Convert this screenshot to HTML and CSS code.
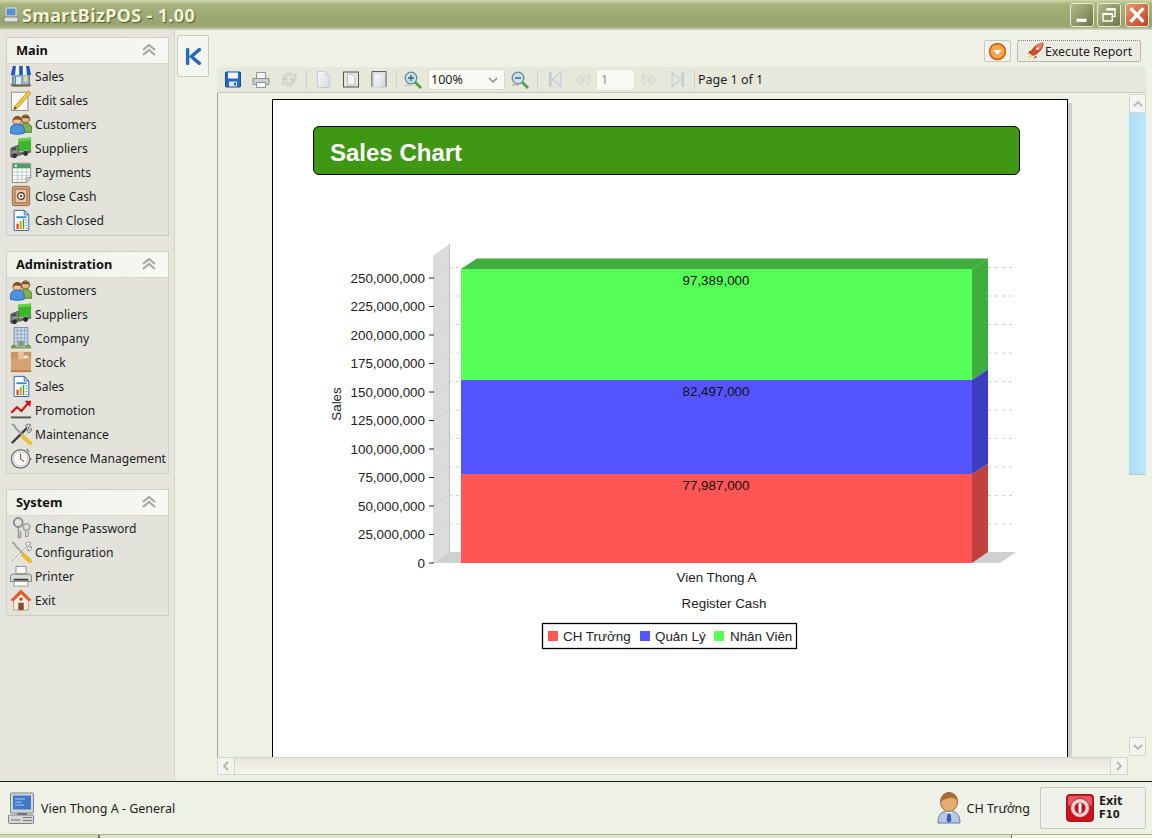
FILE: index.html
```html
<!DOCTYPE html>
<html lang="en">
<head>
<meta charset="utf-8">
<title>SmartBizPOS - 1.00</title>
<link rel="stylesheet" href="styles.css">
</head>
<body>
<svg class="sprites" width="0" height="0" aria-hidden="true">
  <symbol id="i-shop" viewBox="0 0 24 24">
    <rect x="3" y="9" width="18" height="14" fill="#8fb7d8" stroke="#6b5a44"/>
    <rect x="6" y="12" width="7" height="11" fill="#d7ecf7" stroke="#5c7fa3"/>
    <rect x="15" y="12" width="4" height="6" fill="#e6d98a"/>
    <path d="M3 1h18l2 10H1z" fill="#fff"/>
    <path d="M3 1h3.500l-1 10H1zM10 1h4v10h-4zM17.500 1H21l2 10h-4.500z" fill="#1d57c4"/>
    <rect x="1" y="21" width="22" height="2" fill="#7d6a4c"/>
  </symbol>
  <symbol id="i-edit" viewBox="0 0 24 24">
    <rect x="1.500" y="3.500" width="18" height="20" fill="#f7f7f3" stroke="#8b8b86"/>
    <path d="M5 19 20 2l3 2.500L8 21l-4 1.500z" fill="#f2c63b" stroke="#b9871c" stroke-width=".8"/>
    <path d="M4 22.500 5 19l3 2z" fill="#5a4526"/>
  </symbol>
  <symbol id="i-people" viewBox="0 0 24 24">
    <circle cx="17" cy="6.500" r="4.500" fill="#e3b98a" stroke="#6d4a24"/>
    <path d="M12.500 6c.5-4 8-5 9 0-3 0-6-1-9 0z" fill="#7a4d1f"/>
    <path d="M10 20c0-5 3-9 7-9s7 3 7 7v3H10z" fill="#7fb04a" stroke="#4d7a25"/>
    <circle cx="8" cy="8.500" r="4.800" fill="#eec29a" stroke="#7a4d1f"/>
    <path d="M3 8c.5-5 9.500-6 10 0-3-.5-7-2-10 0z" fill="#8a4c18"/>
    <path d="M.5 22v-4c0-4 3.500-6 7.500-6s7.500 2 7.500 6v4c-4 1.500-11 1.500-15 0z" fill="#4d92de" stroke="#2a60aa"/>
  </symbol>
  <symbol id="i-truck" viewBox="0 0 24 24">
    <path d="M9 2l14-1.500V14L9 16z" fill="#3eb52c"/>
    <path d="M9 2l14-1.500v3L9 5z" fill="#62d44e"/>
    <path d="M1 12l8-3v10l-8 2z" fill="#8c8f8c" stroke="#555"/>
    <path d="M2 12.500 7 11v3l-5 1z" fill="#3d4850"/>
    <path d="M0 19l23-5v3L1 23z" fill="#666b68"/>
    <circle cx="5" cy="20.500" r="2.600" fill="#2d2d2d"/>
    <circle cx="17" cy="18" r="2.600" fill="#2d2d2d"/>
  </symbol>
  <symbol id="i-cal" viewBox="0 0 24 24">
    <path d="M2.500 2.500h20V18l-5 5.500h-15z" fill="#fafaf5" stroke="#86867e"/>
    <rect x="3" y="3" width="19" height="5" fill="#4f9e63"/>
    <rect x="5" y="4" width="2.500" height="2.500" fill="#d5efd8"/>
    <path d="M3 12h19M3 16h19M3 20h15M8 9v14M13 9v14M18 9v9" stroke="#b9c2c9" fill="none" stroke-width=".9"/>
    <path d="M17.500 23.500V18h5z" fill="#d8d8cf" stroke="#86867e" stroke-width=".7"/>
  </symbol>
  <symbol id="i-safe" viewBox="0 0 24 24">
    <rect x="2.500" y="1.500" width="19" height="21" rx="2" fill="#d6a37c" stroke="#8a6144"/>
    <rect x="5.500" y="4.500" width="13" height="15" fill="#e8c6a6" stroke="#8d6549"/>
    <circle cx="12" cy="12" r="3.600" fill="#f5eadf" stroke="#4b3325" stroke-width="1.300"/>
    <circle cx="12" cy="12" r="1.200" fill="#352217"/>
  </symbol>
  <symbol id="i-report" viewBox="0 0 24 24">
    <path d="M4.500 1.500h11l5 5v17h-16z" fill="#fbfcff" stroke="#2b5c94"/>
    <path d="M15.500 1.500v5h5z" fill="#b8d3ef" stroke="#2b5c94" stroke-width=".8"/>
    <rect x="7" y="8" width="11" height="2" fill="#2f86d6"/>
    <rect x="7" y="16" width="2.500" height="6" fill="#e0482f"/>
    <rect x="10.500" y="13" width="2.500" height="9" fill="#e8a020"/>
    <rect x="14" y="11" width="1.500" height="11" fill="#33a333"/>
    <path d="M17 12h2M17 15h2M17 18h2M17 21h2" stroke="#2f86d6"/>
  </symbol>
  <symbol id="i-company" viewBox="0 0 24 24">
    <rect x="4.500" y=".5" width="15" height="20" fill="#cfdcea" stroke="#6f8ba8"/>
    <path d="M8 1v19M12 1v19M16 1v19M5 4h14M5 8h14M5 12h14M5 16h14" stroke="#7d9bbb" stroke-width=".8"/>
    <rect x="9" y="15" width="6" height="6" fill="#8f8f84"/>
    <path d="M1 23c0-3 1.500-4 3-4s3 1 3 4zM17 23c0-3 1.500-4 3-4s3 1 3 4z" fill="#6da143"/>
    <rect x="1" y="21.500" width="22" height="2" fill="#7ca253"/>
  </symbol>
  <symbol id="i-box" viewBox="0 0 24 24">
    <rect x="1" y="1" width="22" height="22" fill="#d6a272"/>
    <path d="M1 1h22v7H1z" fill="#c99560"/>
    <rect x="9" y="1" width="6" height="8" fill="#e7c29d"/>
    <rect x="15" y="5" width="5" height="3" fill="#f3ead8"/>
    <path d="M1 23h22v-2H1z" fill="#b27f50"/>
  </symbol>
  <symbol id="i-trend" viewBox="0 0 24 24">
    <path d="M1.500 15 7.500 9l5 4 7-8" fill="none" stroke="#c81818" stroke-width="2.400"/>
    <path d="M16 2h7l-1 7z" fill="#c81818"/>
    <rect x="1" y="19" width="22" height="2.200" fill="#5b5b5b"/>
  </symbol>
  <symbol id="i-tools" viewBox="0 0 24 24">
    <path d="M2 22 20 4" stroke="#3c4348" stroke-width="2.600"/>
    <path d="M17 2.500c2-2 5-1.500 6 0l-3 2.500 1 2 2.500-1c.5 2-1 5-4 4.500L19 8z" fill="#c9ced1" stroke="#555" stroke-width=".7"/>
    <path d="M2 1.500 5 3l1.500 3 15 14.500" fill="none" stroke="#8f979b" stroke-width="2"/>
    <path d="M14 15l8 7" stroke="#ecc22e" stroke-width="4.400" stroke-linecap="round"/>
  </symbol>
  <symbol id="i-wrench" viewBox="0 0 24 24">
    <path d="M2 22 20 4" stroke="#eef0ee" stroke-width="3.400"/>
    <path d="M2 22 20 4" stroke="#9aa09f" stroke-width="1"/>
    <path d="M17 2.500c2-2 5-1.500 6 0l-3 2.500 1 2 2.500-1c.5 2-1 5-4 4.500L19 8z" fill="#f2f3f1" stroke="#666" stroke-width=".7"/>
    <path d="M2 1.500 5 3l1.500 3 15 14.500" fill="none" stroke="#a3a9ab" stroke-width="2"/>
    <path d="M14 15l8 7" stroke="#e6bd30" stroke-width="4.400" stroke-linecap="round"/>
  </symbol>
  <symbol id="i-clock" viewBox="0 0 24 24">
    <circle cx="11.500" cy="13" r="10" fill="#f0efea" stroke="#777" stroke-width="1.600"/>
    <circle cx="11.500" cy="13" r="7.500" fill="#fff" stroke="#c9c9c3"/>
    <path d="M11.500 13V7M11.500 13l4 3" stroke="#b43a2a" stroke-width="1.200"/>
    <path d="M18 2l3 3" stroke="#999" stroke-width="2"/>
    <rect x="21.500" y="12" width="2" height="2" fill="#777"/>
  </symbol>
  <symbol id="i-keys" viewBox="0 0 24 24">
    <circle cx="9" cy="6" r="4.800" fill="none" stroke="#8c9091" stroke-width="2.200"/>
    <path d="M9 11v12l3-1v-2l-1.500-1 1.500-1v-2l-1.500-1" fill="#cfd2d2" stroke="#777" stroke-width=".9"/>
    <circle cx="18" cy="11" r="3.600" fill="none" stroke="#a2a6a6" stroke-width="1.800"/>
    <path d="M17 15v7l3-1v-6" fill="#d6d8d8" stroke="#808080" stroke-width=".8"/>
  </symbol>
  <symbol id="i-printer" viewBox="0 0 24 24">
    <path d="M6.500 1.500h11v8h-11z" fill="#f7f7f5" stroke="#888"/>
    <path d="M3 10h18c1.500 0 2.500 1 2.500 3v5H.5v-5c0-2 1-3 2.500-3z" fill="#d9dbdb" stroke="#777"/>
    <rect x="4" y="15" width="16" height="2" fill="#3d3d3d"/>
    <path d="M5 18h14l1 5H4z" fill="#fcfcfa" stroke="#999"/>
  </symbol>
  <symbol id="i-home" viewBox="0 0 24 24">
    <path d="M12 1 1 12l2.500 1L12 5l8.500 8 2.500-1z" fill="#ef5a1f" stroke="#c8400f" stroke-width=".7"/>
    <path d="M4 13l8-7.500 8 7.500v10H4z" fill="#f6ede0" stroke="#a88f74" stroke-width=".8"/>
    <rect x="9" y="15" width="6" height="8" fill="#8a4a34"/>
    <circle cx="12" cy="11" r="1.800" fill="#c23a20"/>
  </symbol>
  <symbol id="i-computer" viewBox="0 0 26 32">
    <rect x="2.500" y="1" width="23" height="20" rx="1" fill="#d2d6d8" stroke="#7c8488"/>
    <rect x="5" y="3.500" width="18" height="14" fill="#3f78c6"/>
    <path d="M7 7h10M7 10h7M7 13h9" stroke="#a9d2f5"/>
    <path d="M9 21h10v2H9z" fill="#777"/>
    <rect x=".5" y="23" width="25" height="8.500" rx="1" fill="#d5d7d5" stroke="#7b7f80"/>
    <path d="M15 25.500h9M15 28.500h9M3 28h9" stroke="#74787a"/>
  </symbol>
  <symbol id="i-user" viewBox="0 0 24 32">
    <path d="M1 31c0-8 3-12 11-12s11 4 11 12z" fill="#b5c8e6" stroke="#657fa8"/>
    <path d="M8 19h8l-4 4z" fill="#fff"/>
    <path d="M10.500 21.500h3l1 7-2.500 2.500-2.500-2.500z" fill="#3d5ea8"/>
    <ellipse cx="12" cy="10" rx="8.500" ry="9.500" fill="#e3ad70" stroke="#9b6c39"/>
    <path d="M3.500 10C3 2 10 .5 12 .5c5 0 9 3 8.500 9-3-5-9-5-17 .5z" fill="#a66d35"/>
  </symbol>
  <symbol id="i-power" viewBox="0 0 28 28">
    <rect x=".5" y=".5" width="27" height="27" rx="3" fill="#d3101a" stroke="#85222a"/>
    <rect x="2" y="2" width="24" height="10" rx="2" fill="#ea5560"/>
    <circle cx="14" cy="14" r="9.500" fill="#f0d0d2" stroke="#9a1d25" stroke-width=".8"/>
    <circle cx="14" cy="14" r="5.500" fill="#c1121d"/>
    <rect x="12.500" y="9" width="3" height="10" rx="1.200" fill="#fff"/>
  </symbol>
  <symbol id="i-save" viewBox="0 0 16 16">
    <rect x=".5" y=".5" width="15" height="15" rx="1" fill="#2269c8" stroke="#16468c"/>
    <rect x="3" y="1" width="10" height="6" fill="#f3f7fc"/>
    <rect x="4" y="10" width="8" height="5" fill="#dfe7f2"/>
    <rect x="9" y="11" width="2" height="3" fill="#2269c8"/>
  </symbol>
  <symbol id="i-print" viewBox="0 0 18 16">
    <path d="M4.500 .5h9v6h-9z" fill="#f5f5f1" stroke="#8b9399"/>
    <path d="M1 6.500h16v6H1z" fill="#c9ced1" stroke="#8b9399"/>
    <path d="M4.500 10.500h9v5h-9z" fill="#fbfbf8" stroke="#8b9399"/>
  </symbol>
  <symbol id="i-refresh" viewBox="0 0 16 18">
    <path d="M2 8c0-4 3-6 6-6 2 0 4 1 5 3l2-2v6H9l2-2c-1-1-2-2-3-2-2 0-3 1-3 3zM14 10c0 4-3 6-6 6-2 0-4-1-5-3l-2 2V9h6l-2 2c1 1 2 2 3 2 2 0 3-1 3-3z" fill="#dddfd5" stroke="#c3c5bb" stroke-width=".8"/>
  </symbol>
  <symbol id="i-page" viewBox="0 0 14 18">
    <path d="M.5.500h9l4 4v13H.5z" fill="url(#pageFill)" stroke="#c7c7d2"/>
    <path d="M9.500.500v4h4" fill="#e6e6ee" stroke="#c7c7d2"/>
  </symbol>
  <symbol id="i-pagew" viewBox="0 0 16 16">
    <rect x=".5" y=".5" width="15" height="15" fill="none" stroke="#55554f"/>
    <path d="M4.500 2.500h5l2.500 2.500v8.500H4.500z" fill="#f1f1f6" stroke="#b1b1be" stroke-width=".8"/>
  </symbol>
  <symbol id="i-pageh" viewBox="0 0 16 18">
    <path d="M.5 17V.5h15V17" fill="none" stroke="#55554f"/>
    <path d="M2.500 2.500h8l3 3V18h-11z" fill="url(#pageFill)" stroke="#c7c7d2" stroke-width=".8"/>
  </symbol>
  <symbol id="i-zoomin" viewBox="0 0 18 18">
    <circle cx="7" cy="7" r="5.800" fill="#c9e0ee" stroke="#5e8d96" stroke-width="1.300"/>
    <path d="M4 7h6M7 4v6" stroke="#286a7c" stroke-width="1.400"/>
    <path d="M11 11l6 6" stroke="#49a53a" stroke-width="2.600"/>
    <path d="M1 14h7" stroke="#c4c6b8" stroke-width="1.500"/>
  </symbol>
  <symbol id="i-zoomout" viewBox="0 0 18 18">
    <circle cx="7" cy="7" r="5.800" fill="#c9e0ee" stroke="#5e8d96" stroke-width="1.300"/>
    <path d="M4 7h6" stroke="#286a7c" stroke-width="1.400"/>
    <path d="M11 11l6 6" stroke="#49a53a" stroke-width="2.600"/>
    <path d="M1 14h7" stroke="#d8a6a0" stroke-width="1.500"/>
  </symbol>
  <symbol id="i-first" viewBox="0 0 14 16">
    <path d="M3 1v14" stroke="#c7c9cf" stroke-width="2.400"/>
    <path d="M13 1 5 8l8 7z" fill="#e2e4e2" stroke="#c7c9cf"/>
  </symbol>
  <symbol id="i-prev" viewBox="0 0 16 12">
    <path d="M8 1 1 6l7 5zM15 1 8 6l7 5z" fill="#e4e5df" stroke="#d0d2cc"/>
  </symbol>
  <symbol id="i-next" viewBox="0 0 16 12">
    <path d="M1 1l7 5-7 5zM8 1l7 5-7 5z" fill="#e4e5df" stroke="#d0d2cc"/>
  </symbol>
  <symbol id="i-last" viewBox="0 0 14 16">
    <path d="M11 1v14" stroke="#c7c9cf" stroke-width="2.400"/>
    <path d="M1 1l8 7-8 7z" fill="#e2e4e2" stroke="#c7c9cf"/>
  </symbol>
  <symbol id="i-rocket" viewBox="0 0 20 20">
    <path d="M5 13C7 6 12 2 19 1c0 6-4 11-11 14z" fill="#d9482a" stroke="#8d2c18" stroke-width=".7"/>
    <path d="M11 5l4 4c2-2 3-5 4-8-3 0-6 2-8 4z" fill="#e8846c"/>
    <path d="M5 9 2 13l4-1zM11 15l-3 4 4-2z" fill="#a72f1a"/>
    <path d="M5 14 1 19l5-3 1-1z" fill="#f0d040"/>
    <circle cx="12.500" cy="7.500" r="1.500" fill="#f9e8e0"/>
  </symbol>
  <symbol id="i-chev" viewBox="0 0 14 12">
    <path d="M1 6l6-5 6 5M1 11l6-5 6 5" fill="none" stroke="#a9aa9f" stroke-width="2.200"/>
  </symbol>
  <defs>
    <linearGradient id="pageFill" x1="0" y1="0" x2="1" y2="1">
      <stop offset="0" stop-color="#fbfbfd"/>
      <stop offset="1" stop-color="#d6d6e4"/>
    </linearGradient>
  </defs>
</svg>

<div class="app">
  <header class="titlebar">
    <svg class="title-icon" viewBox="0 0 16 16"><rect x="3" y="1" width="10" height="8" rx="1" fill="#5e8fd0" stroke="#d8e4ee"/><rect x="1" y="10" width="14" height="5" fill="#dfe2dc" stroke="#7f8578"/></svg>
    <span class="title-text">SmartBizPOS - 1.00</span>
    <div class="win-controls">
      <button class="win-btn"><svg viewBox="0 0 24 24"><rect x="6" y="16" width="11" height="3.500" fill="#fff"/></svg></button>
      <button class="win-btn"><svg viewBox="0 0 24 24"><path d="M9.500 5.500h9v8h-3M5.500 10.500h10v8h-10z" fill="none" stroke="#fff" stroke-width="1.500"/><path d="M9 5h10v2H9zM5 10h11v2H5z" fill="#fff"/></svg></button>
      <button class="win-btn win-close"><svg viewBox="0 0 24 24"><path d="M5 4.500l14 15M19 4.500l-14 15" stroke="#fff" stroke-width="3.600"/></svg></button>
    </div>
  </header>

  <div class="workspace">
    <aside class="sidebar">
      <section class="panel">
        <h2 class="panel-head">Main<svg class="chev"><use href="#i-chev"/></svg></h2>
        <ul class="panel-list">
          <li class="nav-item"><svg class="nav-icon"><use href="#i-shop"/></svg>Sales</li>
          <li class="nav-item"><svg class="nav-icon"><use href="#i-edit"/></svg>Edit sales</li>
          <li class="nav-item"><svg class="nav-icon"><use href="#i-people"/></svg>Customers</li>
          <li class="nav-item"><svg class="nav-icon"><use href="#i-truck"/></svg>Suppliers</li>
          <li class="nav-item"><svg class="nav-icon"><use href="#i-cal"/></svg>Payments</li>
          <li class="nav-item"><svg class="nav-icon"><use href="#i-safe"/></svg>Close Cash</li>
          <li class="nav-item"><svg class="nav-icon"><use href="#i-report"/></svg>Cash Closed</li>
        </ul>
      </section>
      <section class="panel">
        <h2 class="panel-head">Administration<svg class="chev"><use href="#i-chev"/></svg></h2>
        <ul class="panel-list">
          <li class="nav-item"><svg class="nav-icon"><use href="#i-people"/></svg>Customers</li>
          <li class="nav-item"><svg class="nav-icon"><use href="#i-truck"/></svg>Suppliers</li>
          <li class="nav-item"><svg class="nav-icon"><use href="#i-company"/></svg>Company</li>
          <li class="nav-item"><svg class="nav-icon"><use href="#i-box"/></svg>Stock</li>
          <li class="nav-item"><svg class="nav-icon"><use href="#i-report"/></svg>Sales</li>
          <li class="nav-item"><svg class="nav-icon"><use href="#i-trend"/></svg>Promotion</li>
          <li class="nav-item"><svg class="nav-icon"><use href="#i-tools"/></svg>Maintenance</li>
          <li class="nav-item"><svg class="nav-icon"><use href="#i-clock"/></svg>Presence Management</li>
        </ul>
      </section>
      <section class="panel">
        <h2 class="panel-head">System<svg class="chev"><use href="#i-chev"/></svg></h2>
        <ul class="panel-list">
          <li class="nav-item"><svg class="nav-icon"><use href="#i-keys"/></svg>Change Password</li>
          <li class="nav-item"><svg class="nav-icon"><use href="#i-wrench"/></svg>Configuration</li>
          <li class="nav-item"><svg class="nav-icon"><use href="#i-printer"/></svg>Printer</li>
          <li class="nav-item"><svg class="nav-icon"><use href="#i-home"/></svg>Exit</li>
        </ul>
      </section>
    </aside>

    <div class="toggle-col">
      <button class="collapse-btn">
        <svg viewBox="0 0 16 16"><path d="M2.500 1.500v13M13.500 1.500 6 8l7.500 6.500" fill="none" stroke="#2b6cb8" stroke-width="3.200" stroke-linecap="round"/></svg>
      </button>
    </div>

    <main class="content">
      <div class="actions">
        <button class="drop-btn"><svg viewBox="0 0 18 18"><circle cx="9" cy="9" r="7.500" fill="#f8a84a" stroke="#d2600f" stroke-width="1.600"/><path d="M5 7.500h8L9 12z" fill="#fff"/></svg></button>
        <button class="exec-btn"><svg class="exec-icon"><use href="#i-rocket"/></svg>Execute Report</button>
      </div>

      <div class="toolbar">
        <span class="tool"><svg class="t16"><use href="#i-save"/></svg></span>
        <span class="tool"><svg class="t18"><use href="#i-print"/></svg></span>
        <span class="tool"><svg class="t16"><use href="#i-refresh"/></svg></span>
        <span class="sep"></span>
        <span class="tool"><svg class="t15"><use href="#i-page"/></svg></span>
        <span class="tool"><svg class="t16"><use href="#i-pagew"/></svg></span>
        <span class="tool"><svg class="t16"><use href="#i-pageh"/></svg></span>
        <span class="sep"></span>
        <span class="tool"><svg class="t18"><use href="#i-zoomin"/></svg></span>
        <div class="combo">100%<svg class="combo-arrow" viewBox="0 0 10 6"><path d="M1 1l4 4 4-4" fill="none" stroke="#8f9088" stroke-width="1.600"/></svg></div>
        <span class="tool"><svg class="t18"><use href="#i-zoomout"/></svg></span>
        <span class="sep"></span>
        <span class="tool"><svg class="t15"><use href="#i-first"/></svg></span>
        <span class="tool"><svg class="t16"><use href="#i-prev"/></svg></span>
        <div class="page-input">1</div>
        <span class="tool"><svg class="t16"><use href="#i-next"/></svg></span>
        <span class="tool"><svg class="t15"><use href="#i-last"/></svg></span>
        <span class="sep sep-narrow"></span>
        <span class="page-label">Page 1 of 1</span>
      </div>

      <div class="report">
        <div class="viewport-row">
          <div class="viewport">
            <article class="sheet">
              <h1 class="sheet-title">Sales Chart</h1>
              <svg class="chart" viewBox="273 175 794 582">
                <path d="M433 255.500 449.500 244V552L433 563z" fill="#dcdcdc"/>
                <path d="M449.500 244V552" stroke="#bfbfbf" fill="none"/>
                <path d="M433 563 449.500 552H1016L1000 563z" fill="#d0d0d0"/>
                <g class="grid">
                  <path d="M449 267.500h567M449 296h567M449 324.500h567M449 353h567M449 381.500h567M449 410h567M449 438.500h567M449 467h567M449 495.500h567M449 524h567"/>
                </g>
                <g class="grid-wall">
                  <path d="M433 278 449 267.500M433 306.500 449 296M433 335 449 324.500M433 363.500 449 353M433 392 449 381.500M433 420.500 449 410M433 449 449 438.500M433 477.500 449 467M433 506 449 495.500M433 534.500 449 524"/>
                </g>
                <path d="M461 269 477 258.500H988L972 269z" fill="#3ead3e"/>
                <path d="M972 269 988 258.500V369.500L972 380z" fill="#3ead3e"/>
                <path d="M972 380 988 369.500V464L972 474z" fill="#3d3dc2"/>
                <path d="M972 474 988 464V552L972 563z" fill="#c24040"/>
                <rect x="461" y="269" width="511" height="111" fill="#55ff55"/>
                <rect x="461" y="380" width="511" height="94" fill="#5555ff"/>
                <rect x="461" y="474" width="511" height="89" fill="#ff5555"/>
                <g class="value-labels">
                  <text x="716" y="285">97,389,000</text>
                  <text x="716" y="396">82,497,000</text>
                  <text x="716" y="490">77,987,000</text>
                </g>
                <path d="M429 278h5M429 306.500h5M429 335h5M429 363.500h5M429 392h5M429 420.500h5M429 449h5M429 477.500h5M429 506h5M429 534.500h5M429 563h5" stroke="#222" fill="none"/>
                <g class="axis-labels">
                  <text x="425" y="283">250,000,000</text>
                  <text x="425" y="311">225,000,000</text>
                  <text x="425" y="340">200,000,000</text>
                  <text x="425" y="368">175,000,000</text>
                  <text x="425" y="397">150,000,000</text>
                  <text x="425" y="425">125,000,000</text>
                  <text x="425" y="454">100,000,000</text>
                  <text x="425" y="482">75,000,000</text>
                  <text x="425" y="511">50,000,000</text>
                  <text x="425" y="539">25,000,000</text>
                  <text x="425" y="568">0</text>
                </g>
                <text class="chart-text" transform="translate(341 404) rotate(-90)" text-anchor="middle">Sales</text>
                <text class="chart-text" x="716.500" y="582" text-anchor="middle">Vien Thong A</text>
                <text class="chart-text" x="724" y="608" text-anchor="middle">Register Cash</text>
                <rect class="legend-box" x="542.500" y="623.500" width="254" height="25"/>
                <rect x="548" y="631" width="10" height="10" fill="#ff5555"/>
                <text class="chart-text" x="563" y="641">CH Trưởng</text>
                <rect x="640" y="631" width="10" height="10" fill="#5555ff"/>
                <text class="chart-text" x="655" y="641">Quản Lý</text>
                <rect x="714" y="631" width="10" height="10" fill="#55ff55"/>
                <text class="chart-text" x="730" y="641">Nhân Viên</text>
              </svg>
            </article>
          </div>
          <div class="vbar">
            <button class="sb-btn sb-btn-v"><svg viewBox="0 0 10 6"><path d="M1 5l4-4 4 4" fill="none" stroke="#b5b6ac" stroke-width="1.800"/></svg></button>
            <div class="vtrack"><div class="vthumb"></div></div>
            <button class="sb-btn sb-btn-v"><svg viewBox="0 0 10 6"><path d="M1 1l4 4 4-4" fill="none" stroke="#b5b6ac" stroke-width="1.800"/></svg></button>
          </div>
        </div>
        <div class="hbar">
          <button class="sb-btn sb-btn-h"><svg viewBox="0 0 6 10"><path d="M5 1 1 5l4 4" fill="none" stroke="#b5b6ac" stroke-width="1.800"/></svg></button>
          <div class="htrack"></div>
          <button class="sb-btn sb-btn-h"><svg viewBox="0 0 6 10"><path d="M1 1l4 4-4 4" fill="none" stroke="#b5b6ac" stroke-width="1.800"/></svg></button>
        </div>
      </div>
    </main>
  </div>

  <footer class="statusbar">
    <svg class="status-computer"><use href="#i-computer"/></svg>
    <span class="status-place">Vien Thong A - General</span>
    <svg class="status-user"><use href="#i-user"/></svg>
    <span class="status-name">CH Trưởng</span>
    <button class="exit-btn">
      <svg class="exit-icon"><use href="#i-power"/></svg>
      <span class="exit-text">Exit<small class="exit-key">F10</small></span>
    </button>
  </footer>
  <div class="taskstrip"><span class="strip-a"></span><span class="strip-b"></span><span class="strip-c"></span></div>
</div>
</body>
</html>
```

FILE: styles.css
```css
* { box-sizing: border-box; }
html, body { margin: 0; padding: 0; height: 100%; overflow: hidden; }
body { font-family: "Noto Sans", "Liberation Sans", sans-serif; font-size: 12.5px; color: #1c1c1c; background: #eef1e6; }
button { font: inherit; color: inherit; padding: 0; cursor: default; }
ul { list-style: none; margin: 0; padding: 0; }
h1, h2 { margin: 0; }
.sprites { position: absolute; }

.app { display: flex; flex-direction: column; width: 1152px; height: 838px; }

.titlebar {
  height: 30px; flex: none; display: flex; align-items: center; padding: 0 3px 0 3px;
  background: linear-gradient(#cbd4a4 0, #a6b17b 5px, #98a570 22px, #9da977 27px, #c9cdb6 29px, #d6d8c8 30px);
}
.title-icon { width: 16px; height: 18px; flex: none; }
.title-text {
  margin-left: 3px; font-family: "Noto Sans", sans-serif; font-size: 18px; font-weight: 700; letter-spacing: .35px;
  color: #f0f3d6; text-shadow: 1px 1px 1px #4d5535; line-height: 30px;
}
.win-controls { margin-left: auto; display: flex; gap: 3px; }
.win-btn {
  width: 24px; height: 24px; border: 1px solid #e7ecd2; border-radius: 3px; display: flex; padding: 0;
  background: linear-gradient(135deg, #b1bb8a, #6c7747);
}
.win-btn svg { width: 22px; height: 22px; }
.win-close { background: linear-gradient(135deg, #ea9a6e, #bd3f1f); margin-left: 1px; }

.workspace { flex: 1; display: flex; min-height: 0; }

.sidebar { width: 175px; flex: none; background: #e5e5de; border-right: 1px solid #d5d5cc; padding: 7px 5px 0 6px; display: flex; flex-direction: column; gap: 15px; }
.panel { border: 1px solid #cfd0c6; background: #e3e3dc; }
.panel-head {
  height: 26px; display: flex; align-items: center; justify-content: space-between; padding: 0 12px 2px 9px;
  font-size: 12.8px; font-weight: 700; color: #111; background: linear-gradient(90deg, #f0f0ea, #f8f8f3);
  border-bottom: 1px solid #d8d8cf;
}
.chev { width: 14px; height: 12px; flex: none; }
.panel-list { padding-bottom: 3px; }
.nav-item { height: 24px; display: flex; align-items: center; padding-left: 3px; gap: 3px; white-space: nowrap; font-size: 12.1px; }
.nav-icon { width: 22px; height: 22px; flex: none; }

.toggle-col { width: 42px; flex: none; padding: 5px 0 0 2px; }
.collapse-btn {
  width: 32px; height: 42px; border: 1px solid #c8c9bf; border-radius: 2px; background: #f5f5ef;
  display: flex; align-items: center; justify-content: center;
}
.collapse-btn svg { width: 17px; height: 17px; }

.content { width: 929px; flex: none; display: flex; flex-direction: column; }
.actions { height: 37px; flex: none; display: flex; justify-content: flex-end; align-items: flex-start; padding: 10px 5px 0 0; gap: 6px; }
.drop-btn { width: 27px; height: 22px; border: 1px solid #c9cabf; border-radius: 2px; background: #f3f3ed; display: flex; align-items: center; justify-content: center; }
.drop-btn svg { width: 19px; height: 19px; }
.exec-btn { width: 124px; height: 22px; border: 1px dotted #85867c; border-radius: 2px; background: #ecece5; display: flex; align-items: center; padding-left: 8px; gap: 1px; font-size: 12.3px; white-space: nowrap; }
.exec-icon { width: 18px; height: 18px; flex: none; }

.toolbar { height: 26px; flex: none; display: flex; align-items: center; background: #e6e8dc; border-bottom: 1px solid #c9cabe; padding-left: 2px; font-size: 12.5px; }
.tool { width: 28px; height: 22px; flex: none; display: flex; align-items: center; justify-content: center; }
.t15 { width: 15px; height: 17px; }
.t16 { width: 16px; height: 17px; }
.t18 { width: 18px; height: 18px; }
.sep { width: 6px; height: 18px; flex: none; position: relative; display: flex; justify-content: center; }
.sep::before { content: ""; width: 1px; background: #cfd0c6; }
.sep-narrow { width: 4px; }
.combo {
  width: 77px; height: 21px; margin: 0 1px; flex: none; display: flex; align-items: center; justify-content: space-between;
  padding: 0 6px 0 2px; background: #fbfbf6; border: 1px solid #d9dad0; border-radius: 3px;
}
.combo-arrow { width: 10px; height: 6px; }
.page-input { width: 39px; height: 22px; flex: none; margin-right: 1px; display: flex; align-items: center; padding-left: 4px; color: #8d8d88; background: #f9f9f4; border: 1px solid #e0e1d8; border-radius: 3px; }
.page-label { margin-left: 2px; white-space: nowrap; }

.report { flex: 1; min-height: 0; display: flex; flex-direction: column; padding-bottom: 6px; }
.viewport-row { flex: 1; min-height: 0; display: flex; }
.viewport { width: 912px; flex: none; overflow: hidden; background: #eef1e6; border-left: 1px solid #a2a398; padding: 6px 0 0 54px; }
.sheet { width: 796px; height: 700px; background: #fff; border: 1px solid #000; box-shadow: 4px 4px 0 #cfcfca; padding-top: 26px; }
.sheet-title {
  width: 707px; height: 49px; margin-left: 40px; padding: 4px 0 0 16px; display: flex; align-items: center;
  font-family: "Liberation Sans", sans-serif; font-size: 24px; font-weight: 700; color: #fff;
  background: #3f9714; border: 1px solid #000; border-radius: 6px;
}
.chart { display: block; width: 794px; height: 582px; }
.chart text { font-family: "Liberation Sans", sans-serif; font-size: 13.4px; fill: #222; }
.grid path { stroke: #cfcfcf; stroke-dasharray: 3 4; fill: none; }
.grid-wall path { stroke: #d2d2d2; fill: none; }
.value-labels text { text-anchor: middle; fill: #111; }
.axis-labels text { text-anchor: end; }
.legend-box { fill: #fff; stroke: #000; stroke-width: 1.300; }

.vbar { width: 17px; flex: none; display: flex; flex-direction: column; margin: 1px 0 1px; }
.vtrack { flex: 1; min-height: 0; }
.vthumb { height: 362px; background: linear-gradient(90deg, #a9def6, #bfe7f8); border-bottom: 1px solid #c5c6bc; }
.sb-btn { display: flex; align-items: center; justify-content: center; flex: none; border: 1px solid #d3d4ca; background: #f4f4ee; }
.sb-btn-v { height: 19px; }
.sb-btn-v svg { width: 10px; height: 6px; }
.sb-btn-h { width: 18px; }
.sb-btn-h svg { width: 6px; height: 10px; }
.hbar { height: 18px; flex: none; width: 911px; display: flex; }
.htrack { flex: 1; background: linear-gradient(#e6e6df, #f6f6f0); border-top: 1px solid #d3d4ca; border-bottom: 1px solid #d3d4ca; }

.statusbar { height: 53px; flex: none; display: flex; align-items: center; border-top: 1px solid #1a1a1a; padding: 0 6px 0 8px; background: #eef1e6; }
.status-computer { width: 26px; height: 32px; flex: none; }
.status-place { margin-left: 7px; }
.status-user { width: 24px; height: 32px; flex: none; margin-left: auto; }
.status-name { margin: 0 10px 0 6px; white-space: nowrap; }
.exit-btn { width: 106px; height: 42px; border: 1px solid #c9cabf; border-radius: 2px; background: #f0f0ea; display: flex; align-items: center; padding-left: 25px; gap: 5px; text-align: left; }
.exit-icon { width: 28px; height: 28px; flex: none; }
.exit-text { display: flex; flex-direction: column; font-weight: 700; font-size: 12.5px; line-height: 14px; }
.exit-key { font-family: "DejaVu Sans", sans-serif; font-size: 10px; font-weight: 700; }

.taskstrip { height: 4px; flex: none; display: flex; border-top: 1px solid #a9b68a; }
.strip-a { width: 100px; background: #cfdcb0; border-right: 2px solid #6f7a58; }
.strip-b { width: 912px; background: #dfe4c4; border-right: 1px solid #6f7a58; }
.strip-c { flex: 1; background: #f6f6d8; }
```
